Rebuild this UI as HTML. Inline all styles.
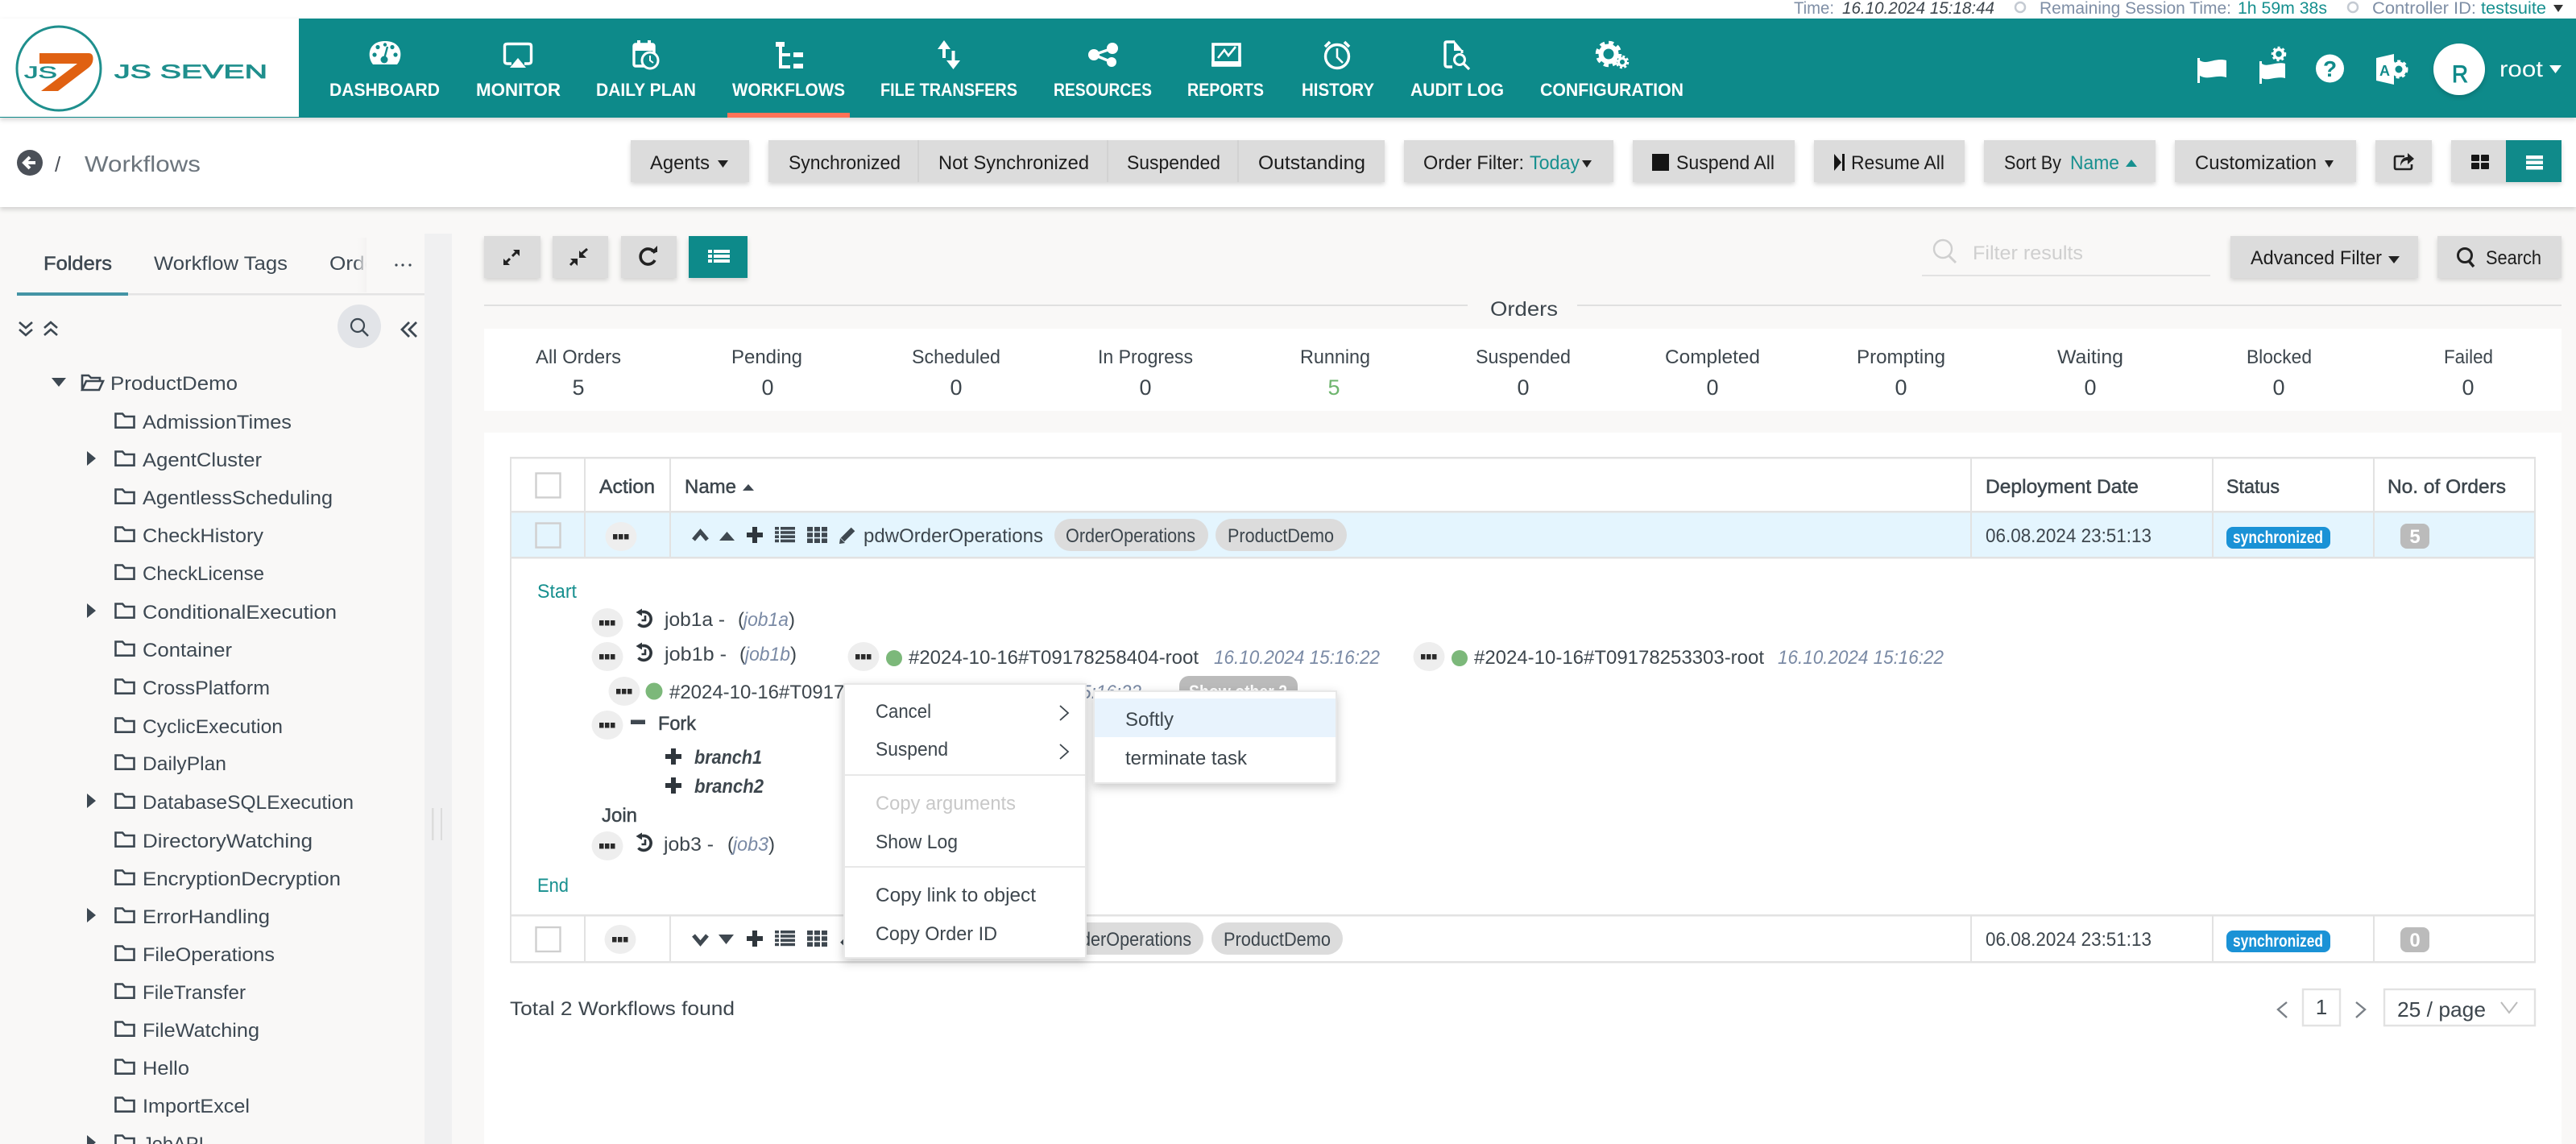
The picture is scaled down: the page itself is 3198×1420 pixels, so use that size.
<!DOCTYPE html>
<html lang="en">
<head>
<meta charset="utf-8">
<title>JS7 Workflows</title>
<style>
html,body{margin:0;padding:0;width:3198px;height:1420px;overflow:hidden;background:#f9f8f7}
svg{display:block}
text{font-family:"Liberation Sans",sans-serif;font-size:24px;fill:#3d464d;white-space:pre}
.nav text{fill:#fff;font-size:22px;font-weight:bold}
.top text{font-size:21px;fill:#7f8fa6}
.btn text{fill:#1d1d1d}
.teal{fill:#17908f !important}
.tree text{font-size:24.5px;fill:#3d4852}
.it{font-style:italic;fill:#7a8aa5}
.b{font-weight:bold}
.md{stroke:#3d464d;stroke-width:.5px}
.menu text{fill:#3d464d;font-size:24px}
</style>
</head>
<body>
<svg xmlns="http://www.w3.org/2000/svg" width="3198" height="1420" viewBox="0 0 3198 1420">
<defs>
<filter id="sh" x="-20%" y="-20%" width="140%" height="150%"><feDropShadow dx="0" dy="3" stdDeviation="3" flood-color="#000" flood-opacity=".16"/></filter>
<filter id="sh2" x="-20%" y="-20%" width="140%" height="140%"><feDropShadow dx="0" dy="4" stdDeviation="6" flood-color="#000" flood-opacity=".22"/></filter>
<linearGradient id="fd" x1="0" x2="1" y1="0" y2="0"><stop offset="0" stop-color="#f9f8f7" stop-opacity="0"/><stop offset="1" stop-color="#f3f2f1"/></linearGradient>
<g id="p"><ellipse cx="0" cy="0" rx="19.5" ry="18" fill="#eeeeee"/><rect x="-10" y="-3" width="5.5" height="6.5" fill="#2a2a2a"/><rect x="-3" y="-3" width="5.5" height="6.5" fill="#2a2a2a"/><rect x="4" y="-3" width="5.5" height="6.5" fill="#2a2a2a"/></g>
<g id="f" fill="none" stroke="#3d4852" stroke-width="2.6"><path d="M1.5,18.7V1.5H10L13,5H24.5V18.7Z"/></g>
<path id="c" d="M0,-9L11,0L0,9Z" fill="#3d4852"/>
<g id="h" fill="none" stroke="#2f363c"><path d="M-3,-9.3A9,9 0 1 1 -7.500,5.500" stroke-width="3.600"/><path d="M-10.500,-9L-3,-13.500V-4.500Z" fill="#2f363c" stroke="none"/><path d="M1,-5V1H-3.500" stroke-width="2.600"/></g>
<g id="l" fill="#3f4850"><rect x="0" y="0" width="5" height="3.6"/><rect x="7" y="0" width="18" height="3.6"/><rect x="0" y="5.2" width="5" height="3.6"/><rect x="7" y="5.2" width="18" height="3.6"/><rect x="0" y="10.4" width="5" height="3.6"/><rect x="7" y="10.4" width="18" height="3.6"/><rect x="0" y="15.6" width="5" height="3.6"/><rect x="7" y="15.6" width="18" height="3.6"/></g>
<g id="g" fill="#3f4850"><rect x="0" y="0" width="7" height="5.6"/><rect x="9" y="0" width="7" height="5.6"/><rect x="18" y="0" width="7" height="5.6"/><rect x="0" y="7.2" width="7" height="5.6"/><rect x="9" y="7.2" width="7" height="5.6"/><rect x="18" y="7.2" width="7" height="5.6"/><rect x="0" y="14.4" width="7" height="5.6"/><rect x="9" y="14.4" width="7" height="5.6"/><rect x="18" y="14.4" width="7" height="5.6"/></g>
<path id="plus" d="M-3,-10H3V-3H10V3H3V10H-3V3H-10V-3H-3Z" fill="#2f363c"/>
</defs>

<!-- page -->
<rect width="3198" height="1420" fill="#f9f8f7"/>

<!-- top strip -->
<rect width="3198" height="23" fill="#fff"/>
<g class="top">
<text x="2227" y="17" textLength="50" lengthAdjust="spacingAndGlyphs">Time:</text>
<text x="2287" y="17" textLength="189" lengthAdjust="spacingAndGlyphs" font-style="italic" style="fill:#3d464d">16.10.2024 15:18:44</text>
<circle cx="2508" cy="9" r="6" fill="none" stroke="#c4cad2" stroke-width="2.5"/>
<text x="2532" y="17" textLength="238" lengthAdjust="spacingAndGlyphs">Remaining Session Time:</text>
<text x="2778" y="17" textLength="111" lengthAdjust="spacingAndGlyphs" class="teal">1h 59m 38s</text>
<circle cx="2921" cy="9" r="6" fill="none" stroke="#c4cad2" stroke-width="2.5"/>
<text x="2945" y="17" textLength="129" lengthAdjust="spacingAndGlyphs">Controller ID:</text>
<text x="3080" y="17" textLength="81" lengthAdjust="spacingAndGlyphs" class="teal">testsuite</text>
<path d="M3170,6H3182L3176,15Z" fill="#333"/>
</g>

<!-- toolbar section background -->
<rect x="0" y="146" width="3198" height="111" fill="#fff" filter="url(#sh)"/>

<!-- nav -->
<rect x="0" y="23" width="3198" height="123" fill="#108a8a" filter="url(#sh)"/>
<rect x="0" y="23" width="371" height="122" fill="#fff"/>
<circle cx="73" cy="85" r="52" fill="none" stroke="#1f8f8d" stroke-width="3"/>
<path d="M49,66H110Q116,66 115.500,74Q115,80 110,84L72,113H51L96,79H49Z" fill="#e06112"/>
<text x="30" y="97" textLength="41" lengthAdjust="spacingAndGlyphs" style="font-size:21px;fill:#1f8f8d;stroke:#1f8f8d;stroke-width:.6px">JS</text>
<text x="142" y="97" textLength="190" lengthAdjust="spacingAndGlyphs" style="font-size:24px;fill:#1f8f8d;stroke:#1f8f8d;stroke-width:.8px">JS SEVEN</text>

<g class="nav">
<text x="409" y="119" textLength="137" lengthAdjust="spacingAndGlyphs">DASHBOARD</text>
<text x="591" y="119" textLength="105" lengthAdjust="spacingAndGlyphs">MONITOR</text>
<text x="740" y="119" textLength="124" lengthAdjust="spacingAndGlyphs">DAILY PLAN</text>
<text x="909" y="119" textLength="140" lengthAdjust="spacingAndGlyphs">WORKFLOWS</text>
<text x="1093" y="119" textLength="170" lengthAdjust="spacingAndGlyphs">FILE TRANSFERS</text>
<text x="1308" y="119" textLength="122" lengthAdjust="spacingAndGlyphs">RESOURCES</text>
<text x="1474" y="119" textLength="95" lengthAdjust="spacingAndGlyphs">REPORTS</text>
<text x="1616" y="119" textLength="90" lengthAdjust="spacingAndGlyphs">HISTORY</text>
<text x="1751" y="119" textLength="116" lengthAdjust="spacingAndGlyphs">AUDIT LOG</text>
<text x="1912" y="119" textLength="178" lengthAdjust="spacingAndGlyphs">CONFIGURATION</text>
</g>
<rect x="903" y="140" width="152" height="6" fill="#ff7257"/>

<!-- nav icons -->
<path d="M463,80C455,70 457,51 478,51C499,51 501,70 493,80Z" fill="#fff"/>
<g fill="#108a8a"><circle cx="465" cy="68" r="2.6"/><circle cx="469" cy="58.500" r="2.6"/><circle cx="478" cy="55.500" r="2.2"/><circle cx="487" cy="58.500" r="2.6"/><circle cx="491" cy="68" r="2.6"/><circle cx="477" cy="74" r="4.500"/></g>
<path d="M477,73L481,58" stroke="#108a8a" stroke-width="2.4"/>

<path d="M635,79H630Q626.500,79 626.500,76V57Q626.500,54.500 630,54.500H656Q659.500,54.500 659.500,57V76Q659.500,79 656,79H651" fill="none" stroke="#fff" stroke-width="3.4"/>
<path d="M643,72L653,84H633Z" fill="#fff"/>

<rect x="787" y="55" width="25" height="27" rx="2" fill="none" stroke="#fff" stroke-width="3.4"/>
<rect x="787" y="55" width="25" height="8" fill="#fff"/>
<rect x="791" y="50" width="4" height="6" fill="#fff"/><rect x="804" y="50" width="4" height="6" fill="#fff"/>
<circle cx="807" cy="75" r="10" fill="#108a8a" stroke="#fff" stroke-width="3"/>
<path d="M807,69V75L811,78" fill="none" stroke="#fff" stroke-width="2"/>

<g fill="#fff"><rect x="963" y="52" width="11" height="6"/><rect x="967" y="58" width="4" height="27"/><rect x="967" y="66" width="14" height="4"/><rect x="967" y="81" width="14" height="4"/><rect x="985" y="65" width="12" height="6"/><rect x="985" y="79" width="12" height="6"/></g>

<g fill="#fff"><path d="M1172,50L1180,61H1164Z"/><rect x="1170" y="60" width="4" height="12"/><path d="M1183.500,86L1192,75H1175Z"/><rect x="1181.500" y="63" width="4" height="13"/></g>

<g fill="#fff"><circle cx="1381" cy="60" r="7"/><circle cx="1358" cy="68" r="7"/><circle cx="1380" cy="77" r="6"/></g>
<path d="M1381,60L1358,68L1380,77" fill="none" stroke="#fff" stroke-width="3.4"/>

<rect x="1506" y="55" width="33" height="26" fill="none" stroke="#fff" stroke-width="3.6"/>
<rect x="1504" y="76" width="37" height="6" fill="#fff"/>
<path d="M1512,72L1520,62L1525,69L1534,58" fill="none" stroke="#fff" stroke-width="2.6"/>

<circle cx="1660" cy="70" r="14.500" fill="none" stroke="#fff" stroke-width="3.4"/>
<path d="M1660,60V71L1667,78" fill="none" stroke="#fff" stroke-width="2.6"/>
<path d="M1645,58L1651,52M1675,58L1669,52" stroke="#fff" stroke-width="3.6"/>

<path d="M1806,52H1796Q1794,52 1794,54V80Q1794,83 1797,83H1803" fill="none" stroke="#fff" stroke-width="3.4"/>
<path d="M1805,50L1816,63H1805Z" fill="#fff"/><path d="M1815,62V66" stroke="#fff" stroke-width="3"/>
<circle cx="1812" cy="74" r="6.500" fill="none" stroke="#fff" stroke-width="3"/>
<path d="M1817,79L1824,86" stroke="#fff" stroke-width="3.2"/>

<circle cx="1997" cy="67" r="9.500" fill="none" stroke="#fff" stroke-width="6"/>
<circle cx="1997" cy="67" r="14" fill="none" stroke="#fff" stroke-width="4.500" stroke-dasharray="6 5"/>
<circle cx="2014" cy="77" r="4.500" fill="none" stroke="#fff" stroke-width="3"/>
<circle cx="2014" cy="77" r="7" fill="none" stroke="#fff" stroke-width="2.500" stroke-dasharray="3 2.500"/>

<!-- nav right -->
<rect x="2728" y="72" width="3" height="31" fill="#fff"/>
<path d="M2731,75C2740,81 2750,71 2764,75V96C2750,92 2742,100 2731,94Z" fill="#fff"/>
<rect x="2805" y="76" width="3" height="28" fill="#fff"/>
<path d="M2808,79C2815,84 2825,76 2837,79V97C2825,94 2816,101 2808,97Z" fill="#fff"/>
<circle cx="2829" cy="67" r="5.500" fill="none" stroke="#fff" stroke-width="3.500"/>
<circle cx="2829" cy="67" r="8" fill="none" stroke="#fff" stroke-width="2.500" stroke-dasharray="3 3"/>
<circle cx="2892.500" cy="85" r="17.500" fill="#fff"/>
<text x="2892.500" y="95" text-anchor="middle" style="font-size:28px;font-weight:bold;fill:#108a8a">?</text>
<path d="M2950,72L2972,67V105L2950,100Z" fill="#fff"/>
<text x="2954" y="94" style="font-size:18px;fill:#108a8a;font-weight:bold">A</text>
<circle cx="2978" cy="86" r="7" fill="none" stroke="#fff" stroke-width="5"/>
<circle cx="2978" cy="86" r="10" fill="none" stroke="#fff" stroke-width="3" stroke-dasharray="4 3.500"/>
<circle cx="3053" cy="86" r="32" fill="#fff" filter="url(#sh)"/>
<text x="3044" y="102" textLength="20" lengthAdjust="spacingAndGlyphs" style="font-size:30px;fill:#108a8a;stroke:#108a8a;stroke-width:.9px">R</text>
<text x="3103" y="95" textLength="54" lengthAdjust="spacingAndGlyphs" style="font-size:28px;fill:#fff">root</text>
<path d="M3165,81H3180L3172.500,91Z" fill="#fff"/>

<!-- breadcrumb -->
<circle cx="37" cy="202" r="16" fill="#4b5058"/>
<path d="M44,202H32M37,195L30,202L37,209" fill="none" stroke="#fff" stroke-width="4"/>
<text x="68" y="213" style="font-size:26px;fill:#4b5058">/</text>
<text x="105" y="213" textLength="144" lengthAdjust="spacingAndGlyphs" style="font-size:28px;fill:#6c757d">Workflows</text>

<!-- toolbar buttons -->
<g class="btn">
<g fill="#dcdcdc" filter="url(#sh)">
<rect x="783" y="174" width="147" height="52"/>
<rect x="954" y="174" width="765" height="52"/>
<rect x="1743" y="174" width="260" height="52"/>
<rect x="2027" y="174" width="201" height="52"/>
<rect x="2252" y="174" width="187" height="52"/>
<rect x="2463" y="174" width="213" height="52"/>
<rect x="2700" y="174" width="225" height="52"/>
<rect x="2949" y="174" width="70" height="52"/>
<rect x="3043" y="174" width="137" height="52"/>
</g>
<rect x="3111" y="174" width="69" height="52" fill="#108a8a"/>
<path d="M1140,174V226M1375,174V226M1537,174V226" stroke="#d2d2d2" stroke-width="2"/>
<text x="807" y="210" textLength="74" lengthAdjust="spacingAndGlyphs">Agents</text>
<path d="M891,199H904L897.500,208Z" fill="#222"/>
<text x="979" y="210" textLength="139" lengthAdjust="spacingAndGlyphs">Synchronized</text>
<text x="1165" y="210" textLength="187" lengthAdjust="spacingAndGlyphs">Not Synchronized</text>
<text x="1399" y="210" textLength="116" lengthAdjust="spacingAndGlyphs">Suspended</text>
<text x="1562" y="210" textLength="133" lengthAdjust="spacingAndGlyphs">Outstanding</text>
<text x="1767" y="210" textLength="125" lengthAdjust="spacingAndGlyphs">Order Filter:</text>
<text x="1899" y="210" textLength="62" lengthAdjust="spacingAndGlyphs" class="teal">Today</text>
<path d="M1964,199H1976L1970,208Z" fill="#222"/>
<rect x="2051" y="191" width="21" height="21" fill="#151515"/>
<text x="2081" y="210" textLength="122" lengthAdjust="spacingAndGlyphs">Suspend All</text>
<path d="M2277,191L2286,201.500L2277,212Z" fill="#151515"/><rect x="2287" y="191" width="3" height="21" fill="#151515"/>
<text x="2298" y="210" textLength="116" lengthAdjust="spacingAndGlyphs">Resume All</text>
<text x="2488" y="210" textLength="71" lengthAdjust="spacingAndGlyphs">Sort By</text>
<text x="2570" y="210" textLength="61" lengthAdjust="spacingAndGlyphs" class="teal">Name</text>
<path d="M2639,207H2653L2646,198Z" fill="#17908f"/>
<text x="2725" y="210" textLength="151" lengthAdjust="spacingAndGlyphs">Customization</text>
<path d="M2886,199H2897L2891.500,208Z" fill="#222"/>
<path d="M2985,194H2975Q2973,194 2973,196V208Q2973,210 2975,210H2992Q2994,210 2994,208V204" fill="none" stroke="#222" stroke-width="2.600"/>
<path d="M2980,206C2980,198 2984,195 2989,195V190L2997,197L2989,204V199C2985,199 2982,201 2980,206Z" fill="#222"/>
<g fill="#161616"><rect x="3068" y="192" width="10" height="8" rx="1"/><rect x="3080" y="192" width="10" height="8" rx="1"/><rect x="3068" y="202" width="10" height="8" rx="1"/><rect x="3080" y="202" width="10" height="8" rx="1"/></g>
<g fill="#fff"><rect x="3136" y="193" width="21" height="4.500"/><rect x="3136" y="199.500" width="21" height="4.500"/><rect x="3136" y="206" width="21" height="4.500"/></g>
</g>

<!-- sidebar -->
<text x="54" y="335" textLength="85" lengthAdjust="spacingAndGlyphs" class="md" style="font-size:24px;fill:#3d4852">Folders</text>
<text x="191" y="335" textLength="166" lengthAdjust="spacingAndGlyphs" style="font-size:24px;fill:#3d4852">Workflow Tags</text>
<text x="409" y="335" textLength="80" lengthAdjust="spacingAndGlyphs" style="font-size:24px;fill:#3d4852">Orders</text>
<rect x="455" y="295" width="72" height="68" fill="#f9f8f7"/>
<rect x="440" y="295" width="15" height="68" fill="url(#fd)"/>
<g fill="#3d4852"><circle cx="492" cy="329" r="1.600"/><circle cx="500" cy="329" r="1.600"/><circle cx="509" cy="329" r="1.600"/></g>
<rect x="21" y="364" width="506" height="2.500" fill="#e4e4e4"/>
<rect x="21" y="363" width="138" height="4" fill="#4494a5"/>
<rect x="527" y="290" width="34" height="1130" fill="#f0f0f1"/>
<rect x="536" y="1003" width="2.500" height="40" fill="#dcdcdc"/><rect x="547" y="1003" width="2" height="40" fill="#dcdcdc"/>

<path d="M24,400L32,407L40,400M24,409L32,416L40,409" fill="none" stroke="#3d4852" stroke-width="2.600"/>
<path d="M55,407L63,400L71,407M55,416L63,409L71,416" fill="none" stroke="#3d4852" stroke-width="2.600"/>
<circle cx="446" cy="405" r="27" fill="#e2e4e8"/>
<circle cx="444" cy="404" r="8" fill="none" stroke="#3d4852" stroke-width="2.200"/><path d="M450,410L457,417" stroke="#3d4852" stroke-width="2.400"/>
<path d="M508,400L499,409L508,418M517,400L508,409L517,418" fill="none" stroke="#3d4852" stroke-width="2.800"/>

<path d="M64,469H82L73,480Z" fill="#3d4852"/>
<path d="M102,484V466H110L113,469H124V473M102,484L107,473H128L123,484Z" fill="none" stroke="#3d4852" stroke-width="2.600"/>
<g class="tree">
<text x="137" y="484" textLength="158" lengthAdjust="spacingAndGlyphs">ProductDemo</text>
<text x="177" y="532" textLength="185" lengthAdjust="spacingAndGlyphs">AdmissionTimes</text>
<text x="177" y="579" textLength="148" lengthAdjust="spacingAndGlyphs">AgentCluster</text>
<text x="177" y="626" textLength="236" lengthAdjust="spacingAndGlyphs">AgentlessScheduling</text>
<text x="177" y="673" textLength="150" lengthAdjust="spacingAndGlyphs">CheckHistory</text>
<text x="177" y="720" textLength="151" lengthAdjust="spacingAndGlyphs">CheckLicense</text>
<text x="177" y="768" textLength="241" lengthAdjust="spacingAndGlyphs">ConditionalExecution</text>
<text x="177" y="815" textLength="111" lengthAdjust="spacingAndGlyphs">Container</text>
<text x="177" y="862" textLength="158" lengthAdjust="spacingAndGlyphs">CrossPlatform</text>
<text x="177" y="910" textLength="174" lengthAdjust="spacingAndGlyphs">CyclicExecution</text>
<text x="177" y="956" textLength="104" lengthAdjust="spacingAndGlyphs">DailyPlan</text>
<text x="177" y="1004" textLength="262" lengthAdjust="spacingAndGlyphs">DatabaseSQLExecution</text>
<text x="177" y="1052" textLength="211" lengthAdjust="spacingAndGlyphs">DirectoryWatching</text>
<text x="177" y="1099" textLength="246" lengthAdjust="spacingAndGlyphs">EncryptionDecryption</text>
<text x="177" y="1146" textLength="158" lengthAdjust="spacingAndGlyphs">ErrorHandling</text>
<text x="177" y="1193" textLength="164" lengthAdjust="spacingAndGlyphs">FileOperations</text>
<text x="177" y="1240" textLength="128" lengthAdjust="spacingAndGlyphs">FileTransfer</text>
<text x="177" y="1287" textLength="145" lengthAdjust="spacingAndGlyphs">FileWatching</text>
<text x="177" y="1334" textLength="58" lengthAdjust="spacingAndGlyphs">Hello</text>
<text x="177" y="1381" textLength="133" lengthAdjust="spacingAndGlyphs">ImportExcel</text>
<text x="177" y="1428" textLength="76" lengthAdjust="spacingAndGlyphs">JobAPI</text>
</g>
<use href="#f" x="142" y="512"/><use href="#f" x="142" y="559"/><use href="#f" x="142" y="606"/><use href="#f" x="142" y="653"/><use href="#f" x="142" y="700"/><use href="#f" x="142" y="748"/><use href="#f" x="142" y="795"/><use href="#f" x="142" y="842"/><use href="#f" x="142" y="890"/><use href="#f" x="142" y="936"/><use href="#f" x="142" y="984"/><use href="#f" x="142" y="1032"/><use href="#f" x="142" y="1079"/><use href="#f" x="142" y="1126"/><use href="#f" x="142" y="1173"/><use href="#f" x="142" y="1220"/><use href="#f" x="142" y="1267"/><use href="#f" x="142" y="1314"/><use href="#f" x="142" y="1361"/><use href="#f" x="142" y="1408"/>
<use href="#c" x="108" y="569"/><use href="#c" x="108" y="758"/><use href="#c" x="108" y="994"/><use href="#c" x="108" y="1136"/><use href="#c" x="108" y="1418"/>

<!-- main top row -->
<g fill="#dcdcdc" filter="url(#sh)">
<rect x="601" y="293" width="70" height="52"/>
<rect x="686" y="293" width="69" height="52"/>
<rect x="771" y="293" width="69" height="52"/>
<rect x="2769" y="293" width="233" height="52"/>
<rect x="3026" y="293" width="154" height="52"/>
</g>
<rect x="855" y="293" width="73" height="52" fill="#108a8a" filter="url(#sh)"/>
<path d="M627,327L633,321M636,318L642,312" stroke="#222" stroke-width="3"/>
<path d="M637,310H645V318ZM625,329V321L633,329Z" fill="#222"/>
<path d="M708,329L714,323M722,315L729,309" stroke="#222" stroke-width="3"/>
<path d="M719,311V320H728ZM708,321H717V330Z" fill="#222"/>
<path d="M813,314A9.500,9.500 0 1 0 813,323" fill="none" stroke="#222" stroke-width="3.600"/>
<path d="M808,313H816V305Z" fill="#222"/>
<g fill="#fff"><rect x="879" y="310" width="5" height="4"/><rect x="886" y="310" width="20" height="4"/><rect x="879" y="316" width="5" height="4"/><rect x="886" y="316" width="20" height="4"/><rect x="879" y="322" width="5" height="4"/><rect x="886" y="322" width="20" height="4"/></g>

<circle cx="2412" cy="309" r="11" fill="none" stroke="#cfcfcf" stroke-width="2.400"/><path d="M2420,318L2428,326" stroke="#cfcfcf" stroke-width="3"/>
<text x="2449" y="322" textLength="137" lengthAdjust="spacingAndGlyphs" style="fill:#cfcfcf">Filter results</text>
<rect x="2386" y="341" width="358" height="2" fill="#e2e2e2"/>
<g class="btn">
<text x="2794" y="328" textLength="163" lengthAdjust="spacingAndGlyphs">Advanced Filter</text>
<path d="M2965,318H2979L2972,327Z" fill="#222"/>
<circle cx="3060" cy="317" r="8.500" fill="none" stroke="#222" stroke-width="3"/><path d="M3065,324L3071,331" stroke="#222" stroke-width="3.500"/>
<text x="3086" y="328" textLength="69" lengthAdjust="spacingAndGlyphs">Search</text>
</g>

<!-- Orders heading and status -->
<rect x="601" y="378" width="1221" height="2" fill="#e0e0e0"/><rect x="1958" y="378" width="1222" height="2" fill="#e0e0e0"/>
<text x="1850" y="392" textLength="84" lengthAdjust="spacingAndGlyphs" style="font-size:25px">Orders</text>
<rect x="601" y="408" width="2579" height="102" fill="#fff"/>
<text x="665" y="451" textLength="106" lengthAdjust="spacingAndGlyphs">All Orders</text>
<text x="908" y="451" textLength="88" lengthAdjust="spacingAndGlyphs">Pending</text>
<text x="1132" y="451" textLength="110" lengthAdjust="spacingAndGlyphs">Scheduled</text>
<text x="1363" y="451" textLength="118" lengthAdjust="spacingAndGlyphs">In Progress</text>
<text x="1614" y="451" textLength="87" lengthAdjust="spacingAndGlyphs">Running</text>
<text x="1832" y="451" textLength="118" lengthAdjust="spacingAndGlyphs">Suspended</text>
<text x="2067" y="451" textLength="118" lengthAdjust="spacingAndGlyphs">Completed</text>
<text x="2305" y="451" textLength="110" lengthAdjust="spacingAndGlyphs">Prompting</text>
<text x="2554" y="451" textLength="82" lengthAdjust="spacingAndGlyphs">Waiting</text>
<text x="2789" y="451" textLength="81" lengthAdjust="spacingAndGlyphs">Blocked</text>
<text x="3034" y="451" textLength="61" lengthAdjust="spacingAndGlyphs">Failed</text>
<g text-anchor="middle">
<text x="718" y="490" style="font-size:27px">5</text><text x="953" y="490" style="font-size:27px">0</text><text x="1187" y="490" style="font-size:27px">0</text><text x="1422" y="490" style="font-size:27px">0</text><text x="1656" y="490" style="font-size:27px;fill:#6eb56e">5</text><text x="1891" y="490" style="font-size:27px">0</text><text x="2126" y="490" style="font-size:27px">0</text><text x="2360" y="490" style="font-size:27px">0</text><text x="2595" y="490" style="font-size:27px">0</text><text x="2829" y="490" style="font-size:27px">0</text><text x="3064" y="490" style="font-size:27px">0</text>
</g>

<!-- card -->
<rect x="601" y="537" width="2579" height="883" fill="#fff"/>

<!-- table -->
<rect x="634" y="636" width="2513" height="56" fill="#e4f5fe"/>
<g fill="#e2e2e2">
<rect x="634" y="567" width="2514" height="2.500"/>
<rect x="634" y="634" width="2514" height="2.500"/>
<rect x="634" y="691" width="2514" height="2.500"/>
<rect x="634" y="1135" width="2514" height="2.500"/>
<rect x="634" y="1193" width="2514" height="2.500"/>
<rect x="633" y="567" width="2" height="628"/>
<rect x="3146" y="567" width="2" height="628"/>
<rect x="725" y="567" width="2" height="125"/><rect x="831" y="567" width="2" height="125"/><rect x="2446" y="567" width="2" height="125"/><rect x="2746" y="567" width="2" height="125"/><rect x="2946" y="567" width="2" height="125"/>
<rect x="725" y="1136" width="2" height="58"/><rect x="831" y="1136" width="2" height="58"/><rect x="2446" y="1136" width="2" height="58"/><rect x="2746" y="1136" width="2" height="58"/><rect x="2946" y="1136" width="2" height="58"/>
</g>
<g fill="none" stroke="#cfcfcf" stroke-width="2.400">
<rect x="665.500" y="587.500" width="30" height="30"/>
<rect x="665.500" y="649.500" width="30" height="30"/>
<rect x="665.500" y="1151" width="30" height="30"/>
</g>
<text x="744" y="612" textLength="69" lengthAdjust="spacingAndGlyphs" class="md">Action</text>
<text x="850" y="612" textLength="64" lengthAdjust="spacingAndGlyphs" class="md">Name</text>
<path d="M922,609H936L929,601Z" fill="#3f4850"/>
<text x="2465" y="612" textLength="190" lengthAdjust="spacingAndGlyphs" class="md">Deployment Date</text>
<text x="2764" y="612" textLength="66" lengthAdjust="spacingAndGlyphs" class="md">Status</text>
<text x="2964" y="612" textLength="147" lengthAdjust="spacingAndGlyphs" class="md">No. of Orders</text>

<!-- row 1 -->
<use href="#p" x="771" y="666"/>
<path d="M861,670L869.500,660L878,670" fill="none" stroke="#3f4850" stroke-width="5"/>
<path d="M893,671H912L902.500,660Z" fill="#3f4850"/>
<use href="#plus" x="937" y="664"/>
<use href="#l" x="962" y="654"/><use href="#g" x="1002" y="654"/>
<path d="M1046,670L1059,657" stroke="#3f4850" stroke-width="6.500"/><path d="M1042,675L1043,668L1049,674Z" fill="#3f4850"/>
<text x="1072" y="673" textLength="223" lengthAdjust="spacingAndGlyphs">pdwOrderOperations</text>
<rect x="1309" y="644" width="191" height="40" rx="20" fill="#dcdcdc"/>
<text x="1323" y="673" textLength="161" lengthAdjust="spacingAndGlyphs">OrderOperations</text>
<rect x="1509" y="644" width="163" height="40" rx="20" fill="#dcdcdc"/>
<text x="1524" y="673" textLength="132" lengthAdjust="spacingAndGlyphs">ProductDemo</text>
<text x="2465" y="673" textLength="206" lengthAdjust="spacingAndGlyphs">06.08.2024 23:51:13</text>
<rect x="2764" y="654" width="129" height="27" rx="8" fill="#1a92d6"/>
<text x="2772" y="674" textLength="112" lengthAdjust="spacingAndGlyphs" class="b" style="fill:#fff;font-size:21px">synchronized</text>
<rect x="2980" y="650" width="36" height="31" rx="8" fill="#bbb"/>
<text x="2998" y="674" text-anchor="middle" class="b" style="fill:#fff;font-size:24px">5</text>

<!-- expanded -->
<text x="667" y="742" textLength="49" lengthAdjust="spacingAndGlyphs" class="teal">Start</text>

<use href="#p" x="754" y="773"/><use href="#h" x="800" y="769"/>
<text x="825" y="777" textLength="75" lengthAdjust="spacingAndGlyphs">job1a -</text>
<text x="916" y="777">(</text><text x="923" y="777" textLength="56" lengthAdjust="spacingAndGlyphs" class="it">job1a</text><text x="979" y="777">)</text>

<use href="#p" x="754" y="815"/><use href="#h" x="800" y="811"/>
<text x="825" y="820" textLength="77" lengthAdjust="spacingAndGlyphs">job1b -</text>
<text x="918" y="820">(</text><text x="925" y="820" textLength="56" lengthAdjust="spacingAndGlyphs" class="it">job1b</text><text x="981" y="820">)</text>

<use href="#p" x="1072" y="815"/>
<circle cx="1110" cy="817" r="10" fill="#7cb87a"/>
<text x="1128" y="824" textLength="360" lengthAdjust="spacingAndGlyphs">#2024-10-16#T09178258404-root</text>
<text x="1507" y="824" textLength="206" lengthAdjust="spacingAndGlyphs" class="it">16.10.2024 15:16:22</text>
<use href="#p" x="1774" y="815"/>
<circle cx="1812" cy="817" r="10" fill="#7cb87a"/>
<text x="1830" y="824" textLength="360" lengthAdjust="spacingAndGlyphs">#2024-10-16#T09178253303-root</text>
<text x="2207" y="824" textLength="206" lengthAdjust="spacingAndGlyphs" class="it">16.10.2024 15:16:22</text>

<use href="#p" x="775" y="858"/>
<circle cx="812" cy="858" r="10.500" fill="#7cb87a"/>
<text x="831" y="867" textLength="360" lengthAdjust="spacingAndGlyphs">#2024-10-16#T09178253202-root</text>
<text x="1211" y="867" textLength="206" lengthAdjust="spacingAndGlyphs" class="it">16.10.2024 15:16:22</text>
<rect x="1464" y="839" width="147" height="40" rx="12" fill="#bbb"/>
<text x="1476" y="866" textLength="122" lengthAdjust="spacingAndGlyphs" class="b" style="fill:#fff;font-size:22px">Show other 2</text>

<use href="#p" x="754" y="900"/>
<rect x="783" y="893.500" width="18" height="5.500" fill="#3f4850"/>
<text x="817" y="906" textLength="47" lengthAdjust="spacingAndGlyphs" class="md">Fork</text>
<use href="#plus" x="836" y="939"/>
<text x="862" y="948" textLength="84" lengthAdjust="spacingAndGlyphs" class="b" font-style="italic">branch1</text>
<use href="#plus" x="836" y="975"/>
<text x="862" y="984" textLength="86" lengthAdjust="spacingAndGlyphs" class="b" font-style="italic">branch2</text>
<text x="747" y="1020" textLength="44" lengthAdjust="spacingAndGlyphs" class="md">Join</text>
<use href="#p" x="754" y="1050"/><use href="#h" x="800" y="1047"/>
<text x="824" y="1056" textLength="62" lengthAdjust="spacingAndGlyphs">job3 -</text>
<text x="903" y="1056">(</text><text x="910" y="1056" textLength="44" lengthAdjust="spacingAndGlyphs" class="it">job3</text><text x="954" y="1056">)</text>
<text x="667" y="1107" textLength="39" lengthAdjust="spacingAndGlyphs" class="teal">End</text>

<!-- row 2 -->
<use href="#p" x="770" y="1166"/>
<path d="M861,1161L869.500,1171L878,1161" fill="none" stroke="#3f4850" stroke-width="5"/>
<path d="M892,1160H911L901.500,1172Z" fill="#3f4850"/>
<use href="#plus" x="937" y="1165"/>
<use href="#l" x="962" y="1155"/><use href="#g" x="1002" y="1155"/>
<path d="M1045.500,1172L1059,1158" stroke="#3f4850" stroke-width="6.500"/>
<rect x="1303" y="1145" width="191" height="40" rx="20" fill="#dcdcdc"/>
<text x="1318" y="1174" textLength="161" lengthAdjust="spacingAndGlyphs">OrderOperations</text>
<rect x="1504" y="1145" width="163" height="40" rx="20" fill="#dcdcdc"/>
<text x="1519" y="1174" textLength="133" lengthAdjust="spacingAndGlyphs">ProductDemo</text>
<text x="2465" y="1174" textLength="206" lengthAdjust="spacingAndGlyphs">06.08.2024 23:51:13</text>
<rect x="2764" y="1155" width="129" height="27" rx="8" fill="#1a92d6"/>
<text x="2772" y="1175" textLength="112" lengthAdjust="spacingAndGlyphs" class="b" style="fill:#fff;font-size:21px">synchronized</text>
<rect x="2980" y="1151" width="36" height="31" rx="8" fill="#bbb"/>
<text x="2998" y="1175" text-anchor="middle" class="b" style="fill:#fff;font-size:24px">0</text>

<!-- footer -->
<text x="633" y="1260" textLength="279" lengthAdjust="spacingAndGlyphs">Total 2 Workflows found</text>
<path d="M2839,1244L2828,1253L2839,1263" fill="none" stroke="#7a8087" stroke-width="2.400"/>
<rect x="2859" y="1228" width="46" height="45" fill="#fff" stroke="#e2e2e2" stroke-width="2.400"/>
<text x="2882" y="1259" text-anchor="middle" style="font-size:26px">1</text>
<path d="M2925,1244L2936,1253L2925,1263" fill="none" stroke="#7a8087" stroke-width="2.400"/>
<rect x="2960" y="1228" width="187" height="45" fill="#fff" stroke="#e2e2e2" stroke-width="2.400"/>
<text x="2976" y="1262" textLength="110" lengthAdjust="spacingAndGlyphs" style="font-size:26px">25 / page</text>
<path d="M3105,1244L3115,1257L3125,1244" fill="none" stroke="#bbb" stroke-width="2"/>

<!-- context menu -->
<g class="menu">
<rect x="1048" y="849" width="300" height="340" fill="#fff" stroke="#e8e8e8" stroke-width="2" filter="url(#sh2)"/>
<text x="1087" y="891" textLength="69" lengthAdjust="spacingAndGlyphs">Cancel</text>
<path d="M1316,876L1326,885L1316,894" fill="none" stroke="#3d464d" stroke-width="1.800"/>
<text x="1087" y="938" textLength="90" lengthAdjust="spacingAndGlyphs">Suspend</text>
<path d="M1316,924L1326,933L1316,942" fill="none" stroke="#3d464d" stroke-width="1.800"/>
<rect x="1048" y="961" width="300" height="2" fill="#e8e8e8"/>
<text x="1087" y="1005" textLength="174" lengthAdjust="spacingAndGlyphs" style="fill:#c8c8c8">Copy arguments</text>
<text x="1087" y="1053" textLength="102" lengthAdjust="spacingAndGlyphs">Show Log</text>
<rect x="1048" y="1075" width="300" height="2" fill="#e8e8e8"/>
<text x="1087" y="1119" textLength="199" lengthAdjust="spacingAndGlyphs">Copy link to object</text>
<text x="1087" y="1167" textLength="151" lengthAdjust="spacingAndGlyphs">Copy Order ID</text>

<rect x="1358" y="858" width="301" height="114" fill="#fff" stroke="#e8e8e8" stroke-width="2" filter="url(#sh2)"/>
<rect x="1359" y="867" width="299" height="48" fill="#e8f3fd"/>
<text x="1397" y="901" textLength="60" lengthAdjust="spacingAndGlyphs">Softly</text>
<text x="1397" y="949" textLength="151" lengthAdjust="spacingAndGlyphs">terminate task</text>
</g>
</svg>
</body>
</html>
